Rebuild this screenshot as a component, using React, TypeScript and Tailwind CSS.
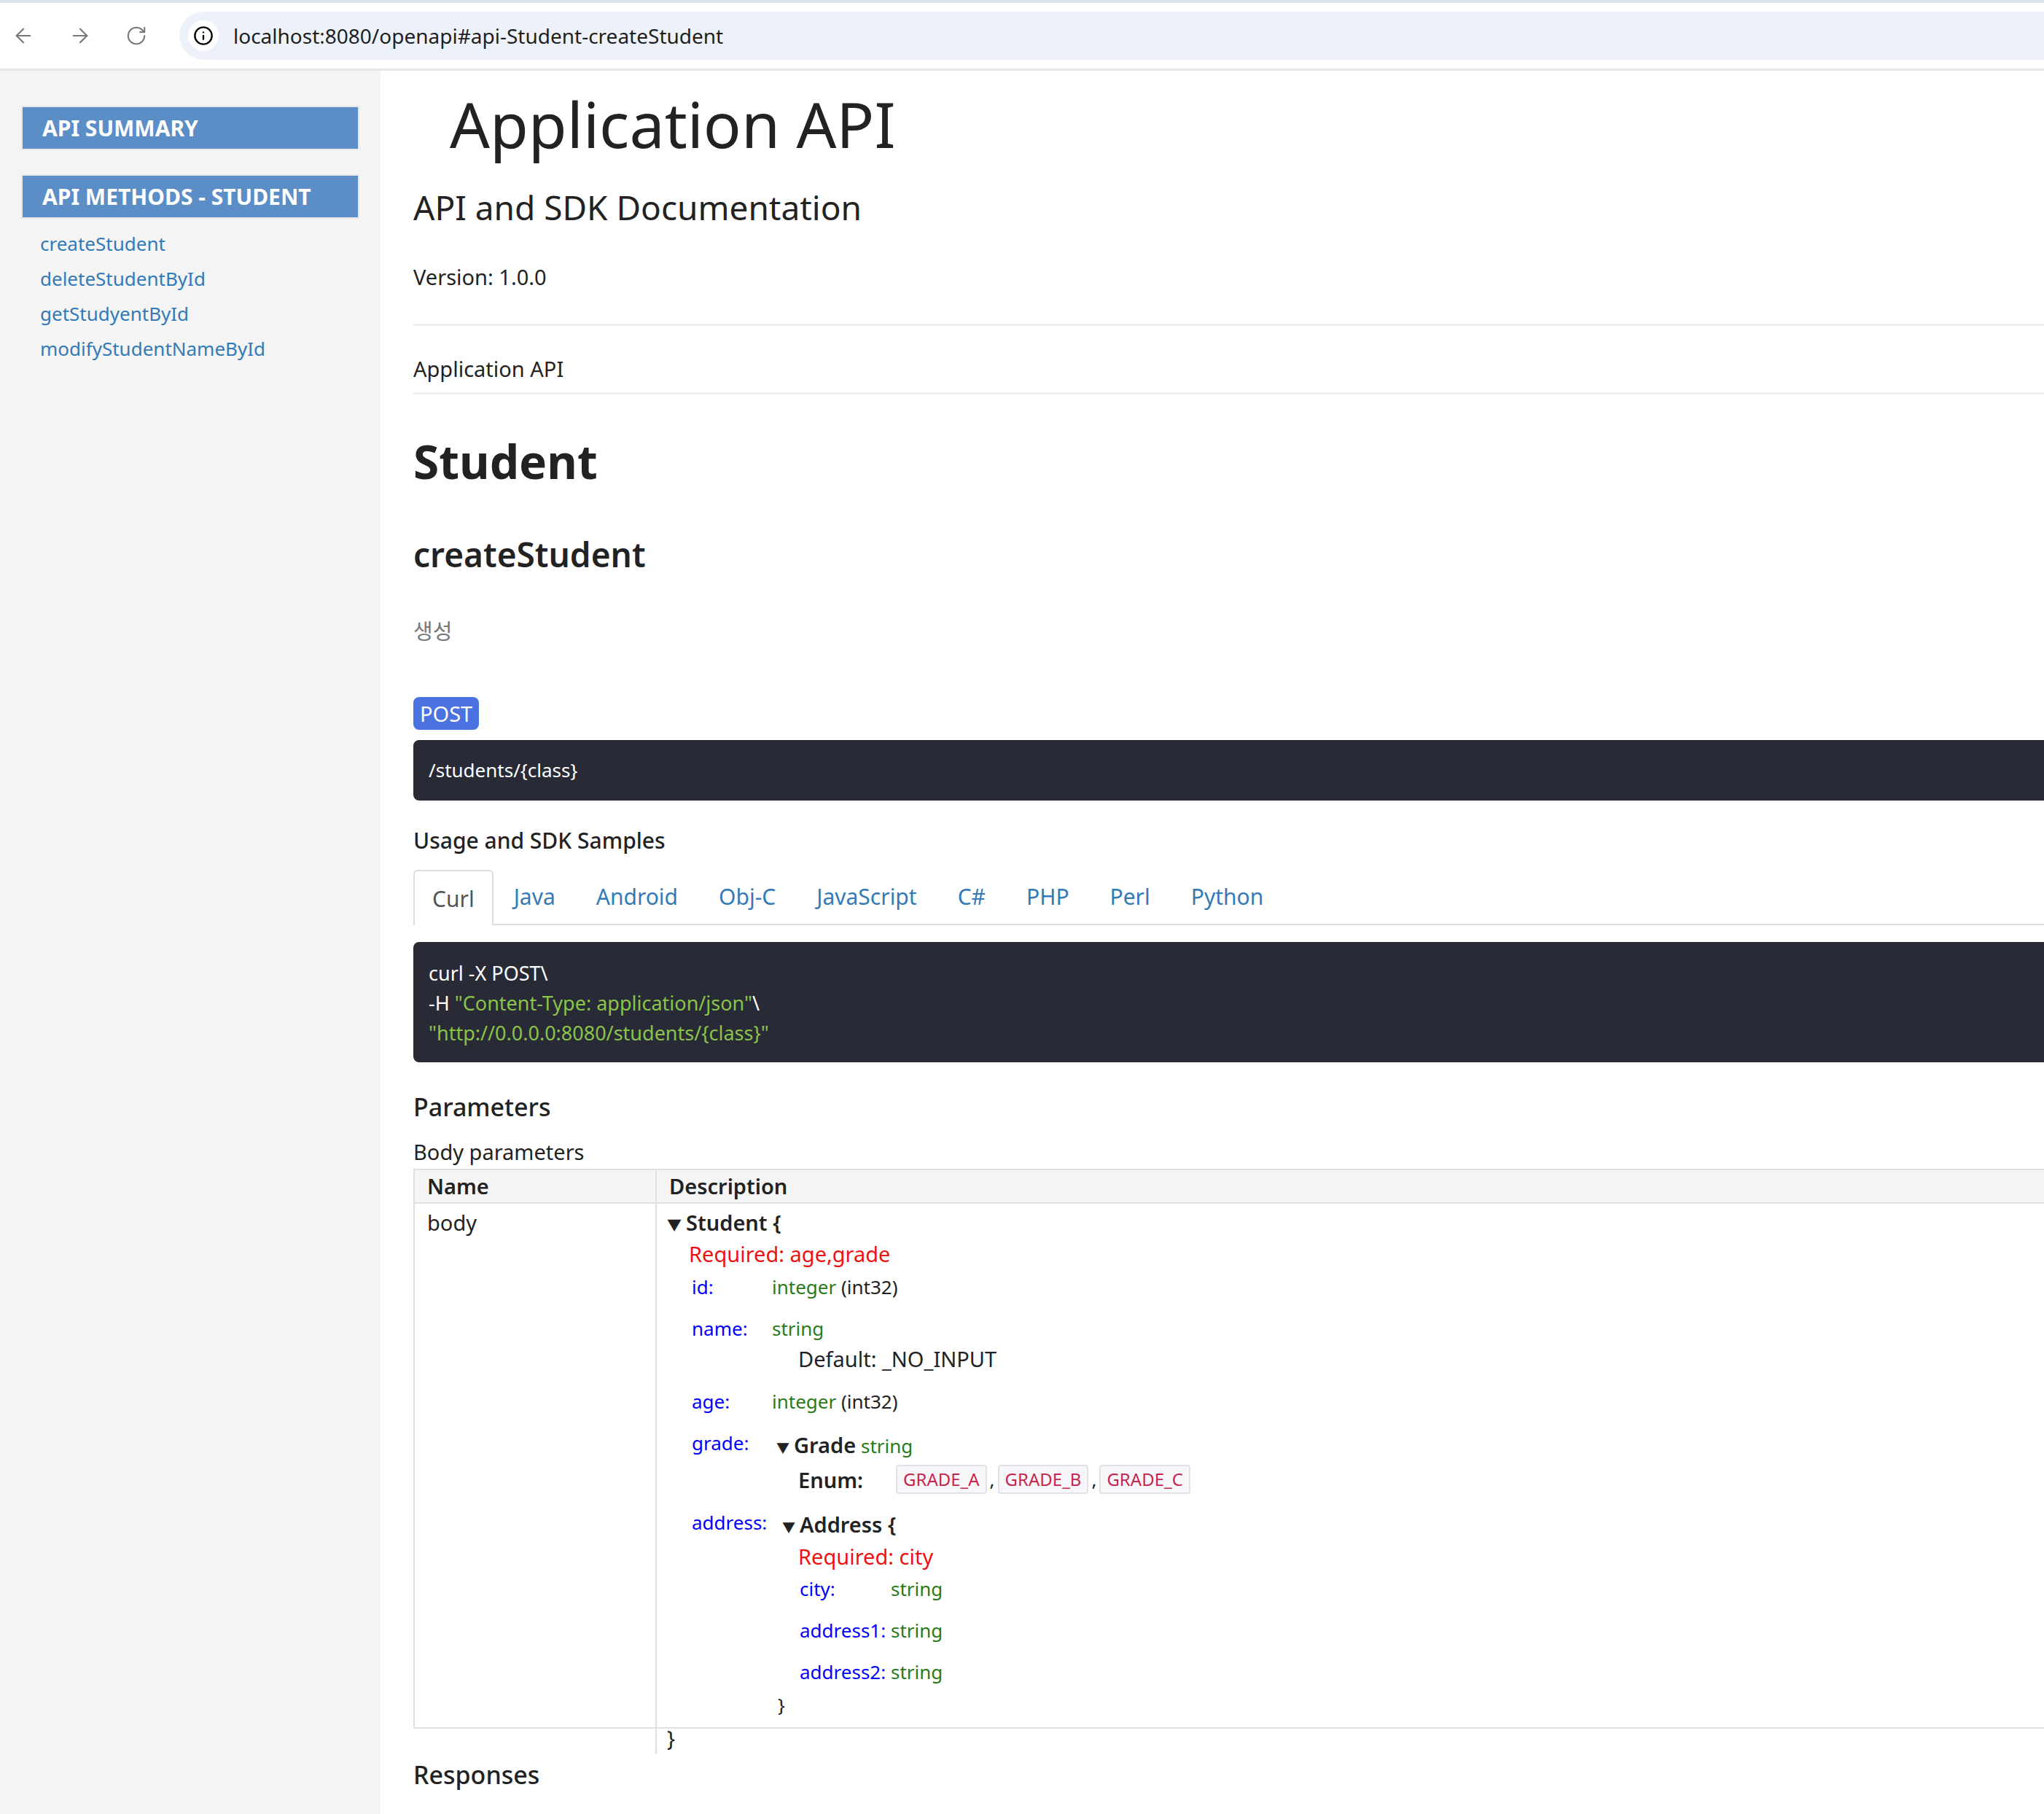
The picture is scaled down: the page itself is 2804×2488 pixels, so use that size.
import { ArrowLeft, ArrowRight, RotateCw, Info } from 'lucide-react'

const font = { fontFamily: '"Noto Sans", "Noto Sans CJK KR", sans-serif' }

function Field({ name, children, w = 'w-[110px]' }: { name: string; children: React.ReactNode; w?: string }) {
  return (
    <div className="flex items-start">
      <span className={`${w} shrink-0 text-[#0000ff]`}>{name}</span>
      <div>{children}</div>
    </div>
  )
}

export default function App() {
  const tabs = ['Curl', 'Java', 'Android', 'Obj-C', 'JavaScript', 'C#', 'PHP', 'Perl', 'Python']
  return (
    <div className="w-[2804px] h-[2488px] bg-white overflow-hidden text-[#333]" style={font}>
      {/* browser bar */}
      <div className="h-[97px] border-t-[4px] border-[#dde3ea] border-b-[3px] border-b-[#e5e5e5] flex items-center">
        <div className="flex items-center gap-[46px] pl-[16px] text-[#777]">
          <ArrowLeft size={32} strokeWidth={1.6} />
          <ArrowRight size={32} strokeWidth={1.6} />
          <RotateCw size={30} strokeWidth={1.6} />
        </div>
        <div className="ml-[44px] flex-1 h-[66px] bg-[#edf2fa] rounded-l-full flex items-center pl-[12px]">
          <div className="w-[42px] h-[42px] rounded-full bg-white flex items-center justify-center">
            <Info size={28} strokeWidth={2} className="text-black" />
          </div>
          <span className="ml-[20px] text-[28px] text-[#1f1f1f]">localhost:8080/openapi#api-Student-createStudent</span>
        </div>
      </div>
      <div className="flex">
        {/* sidebar */}
        <div className="w-[522px] h-[2391px] bg-[#f4f4f4] pt-[48px] px-[29px] shrink-0">
          <div className="h-[61px] bg-[#5b8dc6] border-2 border-[#e8e8e8] flex items-center px-[27px] text-white font-bold text-[30px]">API SUMMARY</div>
          <div className="mt-[33px] h-[61px] bg-[#5b8dc6] border-2 border-[#e8e8e8] flex items-center px-[27px] text-white font-bold text-[30px]">API METHODS - STUDENT</div>
          <div className="mt-[10px] pl-[26px] flex flex-col text-[26px] text-[#337ab7] leading-[48px]">
            <span>createStudent</span>
            <span>deleteStudentById</span>
            <span>getStudyentById</span>
            <span>modifyStudentNameById</span>
          </div>
        </div>
        {/* main */}
        <div className="flex-1 pl-[45px]">
          <h1 className="pl-[50px] text-[86px] leading-none mt-[30px] text-[#222]">Application API</h1>
          <h2 className="mt-[48px] text-[46px] leading-none text-[#222]">API and SDK Documentation</h2>
          <p className="mt-[58px] text-[29px] leading-none text-[#222]">Version: 1.0.0</p>
          <div className="mt-[50px] h-[3px] bg-[#eeeeee]" />
          <p className="mt-[44px] text-[29px] leading-none text-[#222]">Application API</p>
          <div className="mt-[18px] h-[3px] bg-[#eeeeee]" />
          <h2 className="mt-[60px] text-[64px] leading-none font-bold text-[#222]">Student</h2>
          <h3 className="mt-[72px] text-[46px] leading-none font-semibold text-[#222]">createStudent</h3>
          <p className="mt-[68px] text-[29px] leading-none text-[#777]">생성</p>
          <span className="mt-[76px] inline-block bg-[#4a72e0] text-white text-[29px] leading-[45px] px-[9px] rounded-[8px]">POST</span>
          <div className="mt-[14px] h-[83px] bg-[#282b36] rounded-l-[8px] flex items-center pl-[21px] text-white text-[26px]">/students/{'{class}'}</div>
          <p className="mt-[40px] text-[30px] leading-none font-medium text-[#222]">Usage and SDK Samples</p>
          <div className="mt-[25px] flex items-end border-b-2 border-[#ddd] h-[76px] text-[30px]">
            {tabs.map((t, i) => (
              <div
                key={t}
                className={
                  i === 0
                    ? 'h-[76px] px-[24px] flex items-center border-2 border-b-0 border-[#ddd] rounded-t-[6px] bg-white text-[#555] -mb-[2px]'
                    : 'h-[76px] px-[28px] flex items-center text-[#337ab7]'
                }
              >
                {t}
              </div>
            ))}
          </div>
          <div className="mt-[23px] h-[165px] bg-[#282b36] rounded-l-[8px] pl-[21px] pt-[22px] text-[27px] leading-[41px] text-white">
            <div>curl -X POST\</div>
            <div>-H <span className="text-[#8bc34a]">"Content-Type: application/json"</span>\</div>
            <div className="text-[#8bc34a]">"http://0.0.0.0:8080/students/{'{class}'}"</div>
          </div>
          <p className="mt-[44px] text-[34px] leading-none font-medium text-[#222]">Parameters</p>
          <p className="mt-[30px] text-[29px] leading-none text-[#222]">Body parameters</p>
          <div className="mt-[9px] border-2 border-[#e0e0e0] border-r-0 text-[29px] h-[768px] flex flex-col">
            <div className="flex bg-[#f5f5f5] border-b-2 border-[#e0e0e0] h-[58px] items-center font-semibold text-[#222]">
              <div className="w-[332px] pl-[17px] border-r-2 border-[#e0e0e0] h-full flex items-center">Name</div>
              <div className="pl-[17px]">Description</div>
            </div>
            <div className="flex flex-1">
              <div className="w-[332px] pl-[17px] pt-[4px] border-r-2 border-[#e0e0e0] text-[#222]">body</div>
              <div className="pl-[14px] pt-[4px] text-[#222]">
                <div className="font-semibold"><span className="text-[20px] mr-[6px]">▼</span>Student {'{'}</div>
                <div className="pl-[30px] text-[#ee1111]">Required: age,grade</div>
                <div className="pl-[34px] mt-[4px] text-[26px] flex flex-col gap-[18px]">
                  <Field name="id:"><span className="text-[#2a7a1a]">integer</span> (int32)</Field>
                  <Field name="name:">
                    <span className="text-[#2a7a1a]">string</span>
                    <div className="pl-[36px] text-[29px]">Default: _NO_INPUT</div>
                  </Field>
                  <Field name="age:"><span className="text-[#2a7a1a]">integer</span> (int32)</Field>
                  <Field name="grade:">
                    <span className="font-semibold text-[29px] pl-[6px]"><span className="text-[18px] mr-[6px]">▼</span>Grade</span> <span className="text-[#2a7a1a]">string</span>
                    <div className="pl-[36px] flex items-center mt-[4px]">
                      <span className="font-semibold text-[29px] w-[134px]">Enum:</span>
                      {['GRADE_A', 'GRADE_B', 'GRADE_C'].map((g, i) => (
                        <span key={g} className="flex items-end">
                          <span className="bg-[#f7f7f9] border-2 border-[#e1e1e8] rounded-[4px] px-[8px] text-[24px] text-[#c7254e]">{g}</span>
                          {i < 2 && <span className="mx-[4px]">,</span>}
                        </span>
                      ))}
                    </div>
                  </Field>
                  <Field name="address:" w="w-[118px]">
                    <span className="font-semibold text-[29px] pl-[6px]"><span className="text-[18px] mr-[6px]">▼</span>Address {'{'}</span>
                    <div className="pl-[28px] text-[29px] text-[#ee1111]">Required: city</div>
                    <div className="pl-[30px] flex flex-col gap-[18px] mt-[4px]">
                      <Field name="city:" w="w-[125px]"><span className="text-[#2a7a1a]">string</span></Field>
                      <Field name="address1:" w="w-[125px]"><span className="text-[#2a7a1a]">string</span></Field>
                      <Field name="address2:" w="w-[125px]"><span className="text-[#2a7a1a]">string</span></Field>
                    </div>
                    <div className="pl-[-4px] mt-[6px]">{'}'}</div>
                  </Field>
                </div>
                <div className="mt-[4px]">{'}'}</div>
              </div>
            </div>
          </div>
          <p className="mt-[46px] text-[34px] leading-none font-medium text-[#222]">Responses</p>
        </div>
      </div>
    </div>
  )
}
